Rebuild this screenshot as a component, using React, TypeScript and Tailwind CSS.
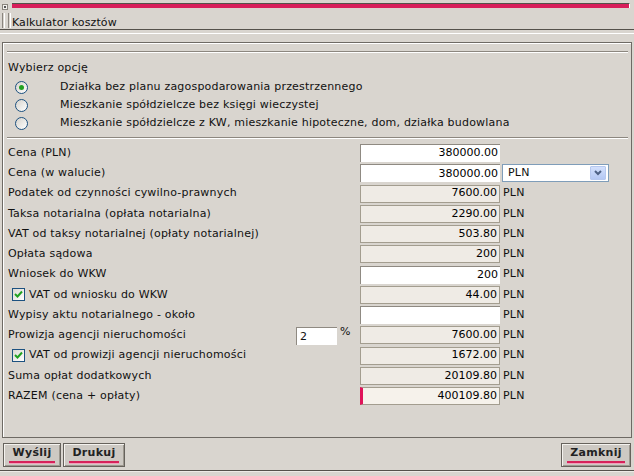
import React from 'react';

const font = { fontFamily: '"DejaVu Sans", Verdana, sans-serif' };

type Row = {
  label: string;
  value: string;
  kind: 'edit' | 'ro' | 'total';
  suffix?: 'pln' | 'select' | 'none';
  check?: boolean;
  percent?: string;
};

const rows: Row[] = [
  { label: 'Cena (PLN)', value: '380000.00', kind: 'edit', suffix: 'none' },
  { label: 'Cena (w walucie)', value: '380000.00', kind: 'edit', suffix: 'select' },
  { label: 'Podatek od czynności cywilno-prawnych', value: '7600.00', kind: 'ro' },
  { label: 'Taksa notarialna (opłata notarialna)', value: '2290.00', kind: 'ro' },
  { label: 'VAT od taksy notarialnej (opłaty notarialnej)', value: '503.80', kind: 'ro' },
  { label: 'Opłata sądowa', value: '200', kind: 'ro' },
  { label: 'Wniosek do WKW', value: '200', kind: 'edit' },
  { label: 'VAT od wniosku do WKW', value: '44.00', kind: 'ro', check: true },
  { label: 'Wypisy aktu notarialnego - około', value: '', kind: 'edit' },
  { label: 'Prowizja agencji nieruchomości', value: '7600.00', kind: 'ro', percent: '2' },
  { label: 'VAT od prowizji agencji nieruchomości', value: '1672.00', kind: 'ro', check: true },
  { label: 'Suma opłat dodatkowych', value: '20109.80', kind: 'ro' },
  { label: 'RAZEM (cena + opłaty)', value: '400109.80', kind: 'total' },
];

const options = [
  'Działka bez planu zagospodarowania przestrzennego',
  'Mieszkanie spółdzielcze bez księgi wieczystej',
  'Mieszkanie spółdzielcze z KW, mieszkanie hipoteczne, dom, działka budowlana',
];

function Radio({ checked }: { checked?: boolean }) {
  return (
    <div className="flex h-[13px] w-[13px] items-center justify-center rounded-full border border-[#1c5180] bg-gradient-to-br from-[#d6d3cc] to-white">
      {checked && <div className="h-[5px] w-[5px] rounded-full bg-[#21a121]" />}
    </div>
  );
}

function Checkbox() {
  return (
    <div className="flex h-[13px] w-[13px] items-center justify-center border border-[#1c5180] bg-gradient-to-br from-[#dcd9d2] to-white">
      <svg width="9" height="9" viewBox="0 0 9 9">
        <path d="M1 4 L3.5 6.5 L8 1.5" fill="none" stroke="#21a121" strokeWidth="2" />
      </svg>
    </div>
  );
}

function Field({ row }: { row: Row }) {
  const base = 'flex h-[18px] w-[140px] items-center justify-end pr-[2px] text-[11px] text-black';
  if (row.kind === 'edit') {
    return (
      <div className={`${base} border-l border-t border-[#8f8a82] bg-white`}>{row.value}</div>
    );
  }
  if (row.kind === 'total') {
    return (
      <div className={`${base} border border-l-[3px] border-[#a39d8f] border-l-[#e0145a] bg-[#f6f2eb]`}>
        {row.value}
      </div>
    );
  }
  return <div className={`${base} border border-[#a39d8f] bg-[#efebe5]`}>{row.value}</div>;
}

function Button({ label, width }: { label: string; width: string }) {
  return (
    <div
      className={`${width} flex h-[24px] flex-col items-center border border-[#66625c] bg-[#cdc9c3] shadow-[inset_1px_1px_0_#f4f2ee,inset_-1px_-1px_0_#9d988f]`}
    >
      <div className="mt-[2px] text-[11px] font-bold leading-[13px] tracking-[0.3px] text-[#222]">{label}</div>
      <div className="mt-[2px] h-[3px] w-[calc(100%-10px)] border-b border-[#f0a0ba] bg-[#d6225a]" />
    </div>
  );
}

export default function App() {
  return (
    <div className="h-[476px] w-[634px] overflow-hidden bg-[#d9d5cf] text-[#111]" style={font}>
      {/* title bar */}
      <div className="flex h-[29px]">
        <div className="flex w-[12px] flex-col pl-[2px] pt-[4px]">
          <div className="flex h-[6px] w-[6px] items-center justify-center border border-[#8a857e] bg-[#f4f2ee]">
            <div className="h-[2px] w-[2px] bg-[#555]" />
          </div>
          <div className="mt-[3px] flex h-[15px] gap-[1px]">
            <div className="w-[1px] bg-[#8a857e]" />
            <div className="w-[1px] bg-white" />
            <div className="w-[1px]" />
            <div className="w-[1px] bg-[#8a857e]" />
            <div className="w-[1px] bg-white" />
          </div>
        </div>
        <div className="flex flex-1 flex-col">
          <div className="mr-[4px] mt-[3px] h-[5px] border-r border-t border-r-white border-t-[#55514b] bg-[#d81e5b]" />
          <div className="mt-[8px] text-[11px] leading-[13px] tracking-[0.1px]">Kalkulator kosztów</div>
        </div>
      </div>
      <div className="h-[5px] border-y border-b-white border-t-[#55514b]" />

      {/* panel */}
      <div className="mx-[2px] mt-[8px] h-[396px] border border-[#6e6a64] shadow-[inset_1px_1px_0_#fff]">
        <div className="ml-[4px] mr-[3px] mt-[8px] h-[2px] border-b border-t border-b-white border-t-[#8c877f]" />
        <div className="pl-[5px] tracking-[0.2px]">
          <div className="mt-[8px] text-[11px] leading-[14px]">Wybierz opcję</div>
          <div className="mt-[3px] flex flex-col">
            {options.map((o, i) => (
              <div key={o} className="flex h-[18px] items-center">
                <div className="ml-[7px]">
                  <Radio checked={i === 0} />
                </div>
                <div className="ml-[32px] text-[11px]">{o}</div>
              </div>
            ))}
          </div>
        </div>
        <div className="ml-[4px] mr-[3px] mt-[5px] h-[2px] border-b border-t border-b-white border-t-[#8c877f]" />

        <div className="mt-[5px] flex flex-col gap-[2.25px] pl-[5px]">
          {rows.map((r) => (
            <div key={r.label} className="flex h-[18px] items-center text-[11px]">
              <div className="flex w-[288px] items-center tracking-[0.2px]">
                {r.check ? (
                  <>
                    <div className="ml-[4px]">
                      <Checkbox />
                    </div>
                    <span className="ml-[4px]">{r.label}</span>
                  </>
                ) : (
                  <span>{r.label}</span>
                )}
              </div>
              <div className="flex w-[64px] items-start self-stretch">
                {r.percent && (
                  <>
                    <div className="mt-[1px] flex h-[18px] w-[41px] items-center border-l border-t border-[#8f8a82] bg-white pl-[3px]">
                      {r.percent}
                    </div>
                    <span className="ml-[3px] mt-[-1px] leading-[13px]">%</span>
                  </>
                )}
              </div>
              <Field row={r} />
              {r.suffix === 'select' ? (
                <div className="ml-[2px] flex h-[18px] w-[107px] items-center justify-between border border-[#7f9db9] bg-white pl-[5px] pr-[2px] tracking-[0.2px]">
                  <span>PLN</span>
                  <div className="flex h-[14px] w-[16px] items-center justify-center rounded-[1px] border border-[#b6c8ef] bg-gradient-to-b from-[#d3e0fc] to-[#b4c8f4]">
                    <svg width="8" height="6" viewBox="0 0 8 6">
                      <path d="M1 1 L4 4 L7 1" fill="none" stroke="#4d6185" strokeWidth="2" />
                    </svg>
                  </div>
                </div>
              ) : r.suffix === 'none' ? null : (
                <span className="ml-[3px] tracking-[0.2px]">PLN</span>
              )}
            </div>
          ))}
        </div>
      </div>

      {/* buttons */}
      <div className="mx-[3px] mt-[5px] flex">
        <Button label="Wyślij" width="w-[58px]" />
        <div className="ml-[2px]">
          <Button label="Drukuj" width="w-[62px]" />
        </div>
        <div className="ml-auto">
          <Button label="Zamknij" width="w-[70px]" />
        </div>
      </div>
      <div className="mt-[3px] h-[2px] border-b border-t border-b-[#eeebe6] border-t-[#55514b]" />
    </div>
  );
}
